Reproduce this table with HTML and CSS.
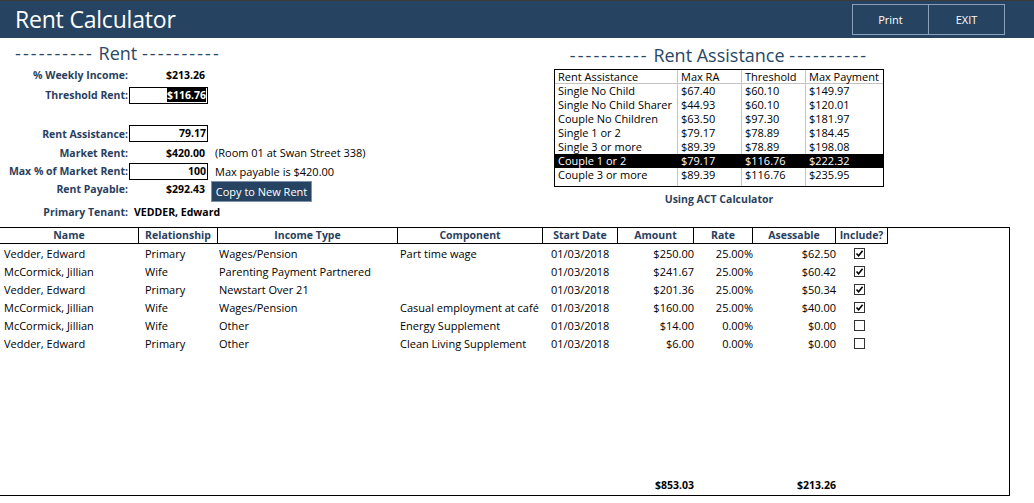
FILE: index.html
```html
<!DOCTYPE html>
<html lang="en">
<head>
<meta charset="utf-8">
<title>Rent Calculator</title>
<link rel="stylesheet" href="styles.css">
</head>
<body>
<header class="topbar">
  <h1 class="app-title">Rent Calculator</h1>
  <div class="actions">
    <button class="top-btn">Print</button><button class="top-btn">EXIT</button>
  </div>
</header>

<section class="upper">
  <div class="rent-panel">
    <h2 class="section-title rent-title"><span class="dashes">----------</span> Rent <span class="dashes">----------</span></h2>
    <div class="rent-form">
      <div class="lbl">% Weekly Income:</div><div class="val">$213.26</div><div></div>
      <div class="lbl">Threshold Rent:</div><div class="box"><span class="sel">$116.76</span></div><div></div>
      <div class="spacer"></div><div></div><div></div>
      <div class="lbl">Rent Assistance:</div><div class="box">79.17</div><div></div>
      <div class="lbl">Market Rent:</div><div class="val">$420.00</div><div class="note">(Room 01 at Swan Street 338)</div>
      <div class="lbl">Max % of Market Rent:</div><div class="box">100</div><div class="note">Max payable is $420.00</div>
      <div class="lbl lift">Rent Payable:</div><div class="val lift">$292.43</div><div class="btn-cell"><button class="copy-btn">Copy to New Rent</button></div>
      <div class="lbl">Primary Tenant:</div><div class="tenant">VEDDER, Edward</div>
    </div>
  </div>

  <div class="ra-panel">
    <h2 class="section-title ra-title"><span class="dashes">----------</span> Rent Assistance <span class="dashes">----------</span></h2>
    <div class="ra-table">
      <div class="ra-row ra-head"><span>Rent Assistance</span><span>Max RA</span><span>Threshold</span><span>Max Payment</span></div>
      <div class="ra-row"><span>Single No Child</span><span>$67.40</span><span>$60.10</span><span>$149.97</span></div>
      <div class="ra-row"><span>Single No Child Sharer</span><span>$44.93</span><span>$60.10</span><span>$120.01</span></div>
      <div class="ra-row"><span>Couple No Children</span><span>$63.50</span><span>$97.30</span><span>$181.97</span></div>
      <div class="ra-row"><span>Single 1 or 2</span><span>$79.17</span><span>$78.89</span><span>$184.45</span></div>
      <div class="ra-row"><span>Single 3 or more</span><span>$89.39</span><span>$78.89</span><span>$198.08</span></div>
      <div class="ra-row selected"><span>Couple 1 or 2</span><span>$79.17</span><span>$116.76</span><span>$222.32</span></div>
      <div class="ra-row"><span>Couple 3 or more</span><span>$89.39</span><span>$116.76</span><span>$235.95</span></div>
      <div class="ra-row ra-fill"><span></span><span></span><span></span><span></span></div>
    </div>
    <div class="ra-caption">Using ACT Calculator</div>
  </div>
</section>

<section class="income-grid">
  <div class="gh">Name</div><div class="gh">Relationship</div><div class="gh">Income Type</div><div class="gh">Component</div><div class="gh">Start Date</div><div class="gh">Amount</div><div class="gh">Rate</div><div class="gh">Asessable</div><div class="gh">Include?</div>

  <div class="c c-name">Vedder, Edward</div><div class="c c-rel">Primary</div><div class="c c-type">Wages/Pension</div><div class="c c-comp">Part time wage</div><div class="c c-date">01/03/2018</div><div class="c c-num">$250.00</div><div class="c c-num">25.00%</div><div class="c c-num">$62.50</div><div class="c c-chk"><span class="chk on"><svg viewBox="0 0 9 9" width="9" height="9"><path d="M1.5 4.5 L3.6 6.8 L7.6 1.8" fill="none" stroke="#000" stroke-width="1.6"/></svg></span></div>

  <div class="c c-name">McCormick, Jillian</div><div class="c c-rel">Wife</div><div class="c c-type">Parenting Payment Partnered</div><div class="c c-comp"></div><div class="c c-date">01/03/2018</div><div class="c c-num">$241.67</div><div class="c c-num">25.00%</div><div class="c c-num">$60.42</div><div class="c c-chk"><span class="chk on"><svg viewBox="0 0 9 9" width="9" height="9"><path d="M1.5 4.5 L3.6 6.8 L7.6 1.8" fill="none" stroke="#000" stroke-width="1.6"/></svg></span></div>

  <div class="c c-name">Vedder, Edward</div><div class="c c-rel">Primary</div><div class="c c-type">Newstart Over 21</div><div class="c c-comp"></div><div class="c c-date">01/03/2018</div><div class="c c-num">$201.36</div><div class="c c-num">25.00%</div><div class="c c-num">$50.34</div><div class="c c-chk"><span class="chk on"><svg viewBox="0 0 9 9" width="9" height="9"><path d="M1.5 4.5 L3.6 6.8 L7.6 1.8" fill="none" stroke="#000" stroke-width="1.6"/></svg></span></div>

  <div class="c c-name">McCormick, Jillian</div><div class="c c-rel">Wife</div><div class="c c-type">Wages/Pension</div><div class="c c-comp">Casual employment at café</div><div class="c c-date">01/03/2018</div><div class="c c-num">$160.00</div><div class="c c-num">25.00%</div><div class="c c-num">$40.00</div><div class="c c-chk"><span class="chk on"><svg viewBox="0 0 9 9" width="9" height="9"><path d="M1.5 4.5 L3.6 6.8 L7.6 1.8" fill="none" stroke="#000" stroke-width="1.6"/></svg></span></div>

  <div class="c c-name">McCormick, Jillian</div><div class="c c-rel">Wife</div><div class="c c-type">Other</div><div class="c c-comp">Energy Supplement</div><div class="c c-date">01/03/2018</div><div class="c c-num">$14.00</div><div class="c c-num">0.00%</div><div class="c c-num">$0.00</div><div class="c c-chk"><span class="chk"></span></div>

  <div class="c c-name">Vedder, Edward</div><div class="c c-rel">Primary</div><div class="c c-type">Other</div><div class="c c-comp">Clean Living Supplement</div><div class="c c-date">01/03/2018</div><div class="c c-num">$6.00</div><div class="c c-num">0.00%</div><div class="c c-num">$0.00</div><div class="c c-chk"><span class="chk"></span></div>

  <div class="grid-fill"></div>

  <div class="total total-amount">$853.03</div>
  <div class="total total-assess">$213.26</div>
</section>
</body>
</html>
```

FILE: styles.css
```css
* { box-sizing: border-box; }

html, body {
  margin: 0;
  padding: 0;
  background: #ffffff;
  font-family: "Open Sans", "Noto Sans", "Liberation Sans", sans-serif;
  font-size: 11px;
  color: #000;
}

button {
  font-family: inherit;
  font-size: 11px;
  cursor: pointer;
}

/* ---------- top bar ---------- */
.topbar {
  height: 38px;
  background: #264461;
  border-top: 1px solid #3b3b3b;
  display: flex;
  align-items: flex-start;
  justify-content: space-between;
  padding: 0 29px 0 15px;
}

.app-title {
  margin: 0;
  color: #ffffff;
  font-weight: 400;
  font-size: 23px;
  line-height: 36px;
  letter-spacing: -0.2px;
}

.actions {
  display: flex;
  margin-top: 3px;
}

.top-btn {
  width: 77px;
  height: 31px;
  background: #264461;
  color: #ffffff;
  border: 1px solid #8aa0bb;
  padding: 0;
}

.top-btn + .top-btn {
  margin-left: -1px;
}

/* ---------- upper section ---------- */
.upper {
  display: flex;
  height: 189px;
}

.rent-panel {
  width: 554px;
}

.section-title {
  margin: 0;
  font-weight: 400;
  font-size: 18px;
  color: #2b4766;
  white-space: nowrap;
  text-align: center;
}

.dashes {
  letter-spacing: 2.1px;
}

.rent-title {
  width: 204px;
  margin-left: 15px;
  height: 28px;
  line-height: 24px;
  padding-top: 3px;
}

.rent-form {
  display: grid;
  grid-template-columns: 128px 80px auto;
  grid-template-rows: 18px 22px 18px 19px 19px 18px 22px 20px;
  align-items: center;
}

.lbl {
  text-align: right;
  font-weight: 700;
  font-size: 10.5px;
  color: #2a3f5e;
  white-space: nowrap;
}

.val {
  text-align: right;
  font-weight: 700;
  font-size: 10.5px;
  padding-right: 3px;
}

.lift {
  align-self: center;
  padding-bottom: 5px;
}

.box {
  margin-left: 1px;
  width: 79px;
  height: 17px;
  border: 1px solid #000;
  text-align: right;
  font-weight: 700;
  font-size: 10.5px;
  padding-right: 1px;
  line-height: 15px;
}

.sel {
  background: #000;
  color: #fff;
}

.note {
  padding-left: 7px;
  white-space: nowrap;
}

.btn-cell {
  padding-left: 3px;
}

.copy-btn {
  height: 21px;
  width: 101px;
  background: #264461;
  color: #ffffff;
  border: 1px solid #7d93ad;
  padding: 0;
  white-space: nowrap;
}

.tenant {
  grid-column: 2 / span 2;
  font-weight: 700;
  font-size: 10.5px;
  padding-left: 6px;
}

/* ---------- rent assistance ---------- */
.ra-panel {
  width: 330px;
}

.ra-title {
  height: 31px;
  line-height: 26px;
  padding-top: 4px;
}

.ra-table {
  border: 1px solid #000;
  width: 330px;
}

.ra-row {
  display: grid;
  grid-template-columns: 122px 64px 64px 78px;
  height: 14px;
  line-height: 14px;
}

.ra-row span {
  padding-left: 3px;
  white-space: nowrap;
  border-left: 1px solid #c4c4c4;
}

.ra-row span:first-child {
  border-left: none;
}

.ra-head {
  border-bottom: 1px solid #c4c4c4;
  line-height: 13px;
}

.ra-row.selected {
  background: #000;
  color: #fff;
}

.ra-row.selected span {
  border-left-color: #000;
}

.ra-row.ra-fill {
  height: 4px;
}

.ra-caption {
  text-align: center;
  font-weight: 700;
  font-size: 10.5px;
  color: #2a3f5e;
  margin-top: 5px;
}

/* ---------- income grid ---------- */
.income-grid {
  display: grid;
  grid-template-columns: 139px 79px 180px 145px 75px 76px 59px 83px 52px 1fr;
  grid-template-rows: 16px repeat(6, 18px) 1fr 18px;
  width: 1010px;
  height: 269px;
  border-top: 1px solid #000;
  border-right: 1px solid #000;
  border-bottom: 1px solid #000;
}

.gh {
  border-right: 1px solid #000;
  border-bottom: 1px solid #000;
  text-align: center;
  font-weight: 700;
  font-size: 10.5px;
  color: #2a3f5e;
  line-height: 14px;
  white-space: nowrap;
}

.c {
  line-height: 18px;
  padding-top: 1px;
  white-space: nowrap;
}

.c-name { grid-column: 1; padding-left: 4px; }
.c-rel { padding-left: 6px; }
.c-type { padding-left: 1px; }
.c-comp { padding-left: 2px; }
.c-date { padding-left: 8px; }
.c-num { text-align: right; }

.c-chk {
  grid-column: 9 / span 2;
  padding-left: 18px;
  display: flex;
  align-items: center;
}

.chk {
  display: inline-flex;
  align-items: center;
  justify-content: center;
  width: 11px;
  height: 11px;
  border: 1px solid #333;
  background: #fff;
}

.grid-fill {
  grid-column: 1 / -1;
}

.total {
  font-weight: 700;
  font-size: 10.5px;
  text-align: right;
  line-height: 17px;
}

.total-amount {
  grid-column: 6;
}

.total-assess {
  grid-column: 8;
}
```
